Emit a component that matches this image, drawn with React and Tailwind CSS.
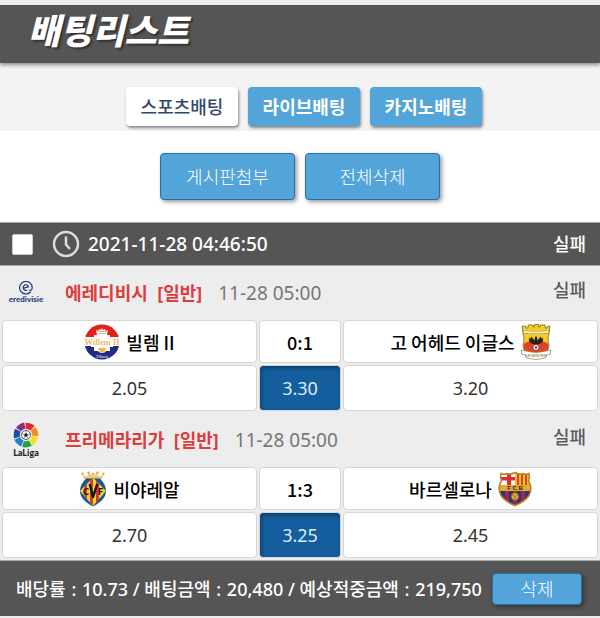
import { useState } from "react";

const EredivisieLogo = () => (
  <svg viewBox="0 0 36 24" className="w-9 h-6" role="img" aria-label="eredivisie">
    <g fill="none" stroke="#1d3f78" strokeLinecap="round">
      <path d="M22.500 11a6.300 6.300 0 1 1 1.700-4.200c0 1.800-1.200 2.800-2.600 2.400" strokeWidth="1.200" />
      <path d="M15.200 7.400l5.200-1.600c-.5-1.600-1.800-2.300-3.200-1.900-1.600.5-2.400 2-1.900 3.500.5 1.700 2 2.400 3.600 1.900" strokeWidth="1.200" />
    </g>
    <text x="18" y="21" textAnchor="middle" fontSize="8" fontWeight="900" fill="#1d3f78" fontFamily="Lato, sans-serif">
      eredivisie
    </text>
  </svg>
);

const petals = ["#e5242b", "#f28c1e", "#f7e01b", "#1fa04a", "#1c86c8", "#1b4fa4", "#8a2a86"];

const LaLigaLogo = () => (
  <svg viewBox="0 0 30 36" className="w-[30px] h-9" role="img" aria-label="LaLiga">
    {petals.map((color, i) => (
      <path
        key={color}
        d="M9.800 1.800Q15-.2 19.500 1.200L17.600 7.200Q15 6.200 12.600 7.400Z"
        fill={color}
        transform={`rotate(${i * 51.4 + 22} 15 13)`}
      />
    ))}
    <circle cx="15" cy="13" r="4.500" fill="#fff" stroke="#222" strokeWidth="0.700" />
    <path d="M15 11l2 1.500-.8 2.300h-2.400l-.8-2.300z" fill="#222" />
    <path d="M15 8.400V11M19.400 11.600L17 12.500M17.600 16.800L16.200 14.800M12.400 16.800L13.800 14.800M10.600 11.600L13 12.500" stroke="#222" strokeWidth="0.500" />
    <text x="15" y="34" textAnchor="middle" fontSize="9" fontWeight="900" fill="#222" fontFamily="Lato, sans-serif">
      LaLiga
    </text>
  </svg>
);

const WillemLogo = () => (
  <svg viewBox="0 0 36 36" className="w-9 h-9" role="img" aria-label="Willem II">
    <clipPath id="willem">
      <circle cx="18" cy="18" r="17.500" />
    </clipPath>
    <g clipPath="url(#willem)">
      <rect width="36" height="36" fill="#fff" />
      <rect width="36" height="13" fill="#e32119" />
      <rect y="22" width="36" height="14" fill="#232a86" />
      <path d="M12 6l2 1 1-2 2 1 1-2 1 2 2-1 1 2 2-1-1 5h3v4h3v8h-3v4h-4q-1 2-4 2t-4-2h-4v-4H7v-8h3v-4h3z" fill="#fff" />
      <path d="M13 7.500h10M13.500 9.500h9" stroke="#d98a80" strokeWidth="0.700" />
      <path d="M14 24h8l-1 3-3 2-3-2z" fill="#efb640" />
    </g>
    <text x="18" y="20.500" textAnchor="middle" fontSize="8.500" fontWeight="700" fill="#f0b75c" fontFamily="Liberation Serif, serif">
      Willem II
    </text>
    <text x="18" y="33.500" textAnchor="middle" fontSize="4" fill="#fff" fontFamily="Liberation Serif, serif">
      Tilburg
    </text>
  </svg>
);

const EaglesLogo = () => (
  <svg viewBox="0 0 30 36" className="w-[30px] h-9" role="img" aria-label="Go Ahead Eagles">
    <path d="M1 2l4 .5V4h2V1h5v2h1.500V.5h4V3H19V1h5v3h2V2.500L29 2l-1 8c-1.500 4-1 7 0 11 0 6-4 9-13 12C6 30 2 27 2 21c1-4 1.500-7 0-11z" fill="#f8cf1e" stroke="#75662c" strokeWidth="0.800" />
    <path d="M2.500 6.500q12.500 2 25 0v3q-12.500 2-25 0z" fill="#f9edc0" stroke="#a08c3c" strokeWidth="0.400" />
    <text x="15" y="9.500" textAnchor="middle" fontSize="2.500" fill="#75662c" fontFamily="Liberation Sans, sans-serif">
      GO AHEAD EAGLES
    </text>
    <path d="M3 20q2-3 7-2l5 2 5-2q5-1 7 2v6q-12 4-24 0z" fill="#e2402a" />
    <path d="M15 12l1.200 1.500V16l1.300-.5 2-3.200.5 2.200 2-1-.5 2 1 .5-1.500 2.500-2.500 1.500-3.500.5-3.500-.5L9 18.500 7.500 16l1-.5-.5-2 2 1 .5-2.200 2 3.200 1.300.5v-2.500z" fill="#2b211b" />
    <circle cx="15" cy="23.500" r="2.800" fill="#fff" stroke="#333" strokeWidth="0.500" />
    <path d="M15 22.300l1.200.9-.4 1.300h-1.600l-.4-1.300z" fill="#222" />
    <path d="M.5 26l4 1q10.500 3 21 0l4-1v4l-4 1-1 3q-9.500 3-19 0l-1-3-4-1z" fill="#fff" stroke="#75662c" strokeWidth="0.600" />
    <text x="15" y="32.800" textAnchor="middle" fontSize="4" fill="#75662c" fontFamily="Liberation Sans, sans-serif">
      DEVENTER
    </text>
  </svg>
);

const VillarrealLogo = () => (
  <svg viewBox="0 0 28 36" className="w-7 h-9" role="img" aria-label="Villarreal">
    <path d="M5 8L3.500 3.500 8 5.500 10 2l4 3 4-3 2 3.500 4.500-2L23 8z" fill="#f0ca72" />
    <g fill="#d9a53f">
      <circle cx="3.500" cy="2.800" r="1.200" />
      <circle cx="9.500" cy="1.800" r="1.200" />
      <circle cx="14" cy="3" r="1.200" />
      <circle cx="18.500" cy="1.800" r="1.200" />
      <circle cx="24.500" cy="2.800" r="1.200" />
    </g>
    <path d="M7 7.500h14c9 9 9 20-7 28C-2 27.500-2 16.500 7 7.500z" fill="#155a94" />
    <path d="M14 6.500L27 20 14 35 1 20z" fill="#f3d330" />
    <path d="M14 6.500l-3 3.200v22l3 3.300zM17 9.700v22l3-3.500V12.800zM8 12.800v15.300l-2.500-3V15.300z" fill="#d93832" />
    <path d="M9.500 13h2.500l2 9 3-9h2.500l-4.500 14h-2z" fill="#161313" />
    <text x="7" y="23.500" textAnchor="middle" fontSize="9" fontWeight="900" fill="#161313" fontFamily="Lato, sans-serif">
      C
    </text>
    <text x="21.500" y="23.500" textAnchor="middle" fontSize="9" fontWeight="900" fill="#161313" fontFamily="Lato, sans-serif">
      F
    </text>
  </svg>
);

const BarcelonaLogo = () => (
  <svg viewBox="0 0 34 36" className="w-[34px] h-9" role="img" aria-label="Barcelona">
    <clipPath id="barca">
      <path d="M3 2.500q3 1.500 6 0 4 1.500 8-1 4 2.500 8 1 3 1.500 6 0l.5 4q-2 3 .5 6 2 7-1 12-4 6-14 10Q7 30.500 3 24.500q-3-5-1-12 2.500-3 .5-6z" />
    </clipPath>
    <g clipPath="url(#barca)">
      <rect width="34" height="36" fill="#f3bd2b" />
      <rect width="17" height="15" fill="#fff" />
      <path d="M9 0h4v15H9zM3 6h14v3.500H3z" fill="#df2b32" />
      <path d="M19 1h2v14h-2zM23 1h2v14h-2zM27 1h2v14h-2z" fill="#db442c" />
      <path d="M0 20h34v16H0z" fill="#24377b" />
      <path d="M7 20h4v16H7zM15 20h4v16h-4zM23 20h4v16h-4z" fill="#a52545" />
      <path d="M0 14h34v6H0z" fill="#e2ac30" />
    </g>
    <path d="M3 2.500q3 1.500 6 0 4 1.500 8-1 4 2.500 8 1 3 1.500 6 0l.5 4q-2 3 .5 6 2 7-1 12-4 6-14 10Q7 30.500 3 24.500q-3-5-1-12 2.500-3 .5-6z" fill="none" stroke="#b48224" strokeWidth="1.500" />
    <text x="17" y="19.300" textAnchor="middle" fontSize="6" fontWeight="700" fill="#332512" fontFamily="Liberation Sans, sans-serif">
      F C B
    </text>
    <circle cx="17" cy="25.500" r="3.700" fill="#e2ac30" stroke="#8a5b1c" strokeWidth="0.600" />
    <path d="M14 24l3 1.500 3-1.500M17 25.500V29" fill="none" stroke="#8a5b1c" strokeWidth="0.600" />
  </svg>
);

const ClockIcon = () => (
  <svg viewBox="0 0 28 28" className="w-7 h-7" fill="none" stroke="#dcdcdc" aria-hidden="true">
    <circle cx="14" cy="14" r="12" strokeWidth="2.500" />
    <path d="M14 6.500V14.500L18 19" strokeWidth="2.500" />
  </svg>
);

const tabs = ["스포츠배팅", "라이브배팅", "카지노배팅"];

const games = [
  {
    league: "에레디비시",
    logo: <EredivisieLogo />,
    time: "11-28 05:00",
    result: "실패",
    home: "빌렘 II",
    homeLogo: <WillemLogo />,
    away: "고 어헤드 이글스",
    awayLogo: <EaglesLogo />,
    score: "0:1",
    odds: ["2.05", "3.30", "3.20"],
  },
  {
    league: "프리메라리가",
    logo: <LaLigaLogo />,
    time: "11-28 05:00",
    result: "실패",
    home: "비야레알",
    homeLogo: <VillarrealLogo />,
    away: "바르셀로나",
    awayLogo: <BarcelonaLogo />,
    score: "1:3",
    odds: ["2.70", "3.25", "2.45"],
  },
];

const teamCell =
  "flex items-center justify-center gap-1.5 h-[43px] bg-white border border-[#d6d6d6] rounded-sm font-medium text-black font-['Noto_Sans_CJK_KR',sans-serif]";
const oddCell = "h-[46px] border border-[#d6d6d6] rounded-sm";

const Game = ({ game }) => {
  const [picked, setPicked] = useState(1);

  return (
    <section>
      {/* League */}
      <div className="flex h-[54px] pr-3.5">
        <div className="w-[52px] flex items-center justify-center">{game.logo}</div>
        <div className="flex-1 flex items-center pl-[13px]">
          <h2 className="font-bold text-[#dc3d3e] whitespace-pre">{game.league}  [일반]</h2>
          <span className="ml-4 text-[19px] text-[#777]">{game.time}</span>
        </div>
        <span className="pt-3 leading-6 font-medium text-[#5c5c5c]">{game.result}</span>
      </div>

      {/* Teams and odds */}
      <div className="grid grid-cols-[1fr_82px_1fr] gap-0.5 px-0.5 pb-0.5">
        <div className={teamCell}>
          {game.homeLogo}
          {game.home}
        </div>
        <div className={teamCell}>{game.score}</div>
        <div className={teamCell}>
          {game.away}
          {game.awayLogo}
        </div>
        {game.odds.map((odd, i) => (
          <button
            key={i}
            type="button"
            onClick={() => setPicked(i)}
            className={
              picked === i
                ? `${oddCell} bg-[#145e9d] text-[#dcebf7] shadow-[inset_1px_2px_4px_#0b3a63]`
                : `${oddCell} bg-white text-[#333]`
            }
          >
            {odd}
          </button>
        ))}
      </div>
    </section>
  );
};

const App = () => {
  const [tab, setTab] = useState(0);

  return (
    <div className="bg-white text-lg leading-6 font-['Noto_Sans','Noto_Sans_CJK_KR',sans-serif]">
      {/* Header */}
      <header className="relative border-t-[5px] border-[#ececec] bg-[#555] h-[63px] px-7 pb-1.5 flex items-center shadow-[0_2px_4px_#888]">
        <h1 className="text-[35px] leading-10 font-black italic text-white [text-shadow:2px_2px_2px_#333]">
          배팅리스트
        </h1>
      </header>

      {/* Tabs */}
      <nav className="bg-[#f3f3f3] pt-6 pb-[5px] pl-2 flex justify-center gap-2.5">
        {tabs.map((name, i) => (
          <button
            key={name}
            type="button"
            onClick={() => setTab(i)}
            className={
              tab === i
                ? "w-28 h-[39px] rounded-sm bg-white text-[#33496a] font-medium shadow-[1px_2px_3px_#888]"
                : "w-28 h-[39px] rounded-sm bg-[#53a4d8] text-white font-bold shadow-[1px_2px_3px_#888]"
            }
          >
            {name}
          </button>
        ))}
      </nav>

      <div className="flex justify-center gap-2.5 py-[22px]">
        <button
          type="button"
          className="w-[135px] h-[47px] rounded border border-[#2270ae] bg-[#53a4d8] text-white font-light shadow-[2px_2px_4px_#999]"
        >
          게시판첨부
        </button>
        <button
          type="button"
          className="w-[135px] h-[47px] rounded border border-[#2270ae] bg-[#53a4d8] text-white font-light shadow-[2px_2px_4px_#999]"
        >
          전체삭제
        </button>
      </div>

      {/* Bet slip */}
      <main className="bg-[#ededed]">
        <div className="flex items-center h-11 bg-[#555] border-y border-[#aaa] text-white font-medium pl-3 pr-3.5">
          <label className="flex items-center text-[19px]">
            <input
              type="checkbox"
              className="appearance-none w-[21px] h-[21px] bg-white border border-[#ccc] rounded-xs checked:bg-[#53a4d8]"
            />
            <span className="ml-[19px] mr-2">
              <ClockIcon />
            </span>
            2021-11-28 04:46:50
          </label>
          <span className="ml-auto">실패</span>
        </div>

        {games.map((game) => (
          <Game key={game.league} game={game} />
        ))}
      </main>

      {/* Totals */}
      <footer className="flex items-center justify-between h-[58px] bg-[#555] border-t border-t-[#aaa] border-b-2 border-b-[#ececec] pl-4 pr-[18px] text-white font-medium whitespace-nowrap">
        <p>
          배당률 <span className="mx-px">:</span> 10.73 / 배팅금액 <span className="mx-px">:</span> 20,480 / 예상적중금액{" "}
          <span className="mx-px">:</span> 219,750
        </p>
        <button
          type="button"
          className="w-[90px] h-8 rounded border border-[#2270ae] bg-[#53a4d8] text-white font-light shadow-[2px_2px_4px_#333]"
        >
          삭제
        </button>
      </footer>
    </div>
  );
};

export default App;
